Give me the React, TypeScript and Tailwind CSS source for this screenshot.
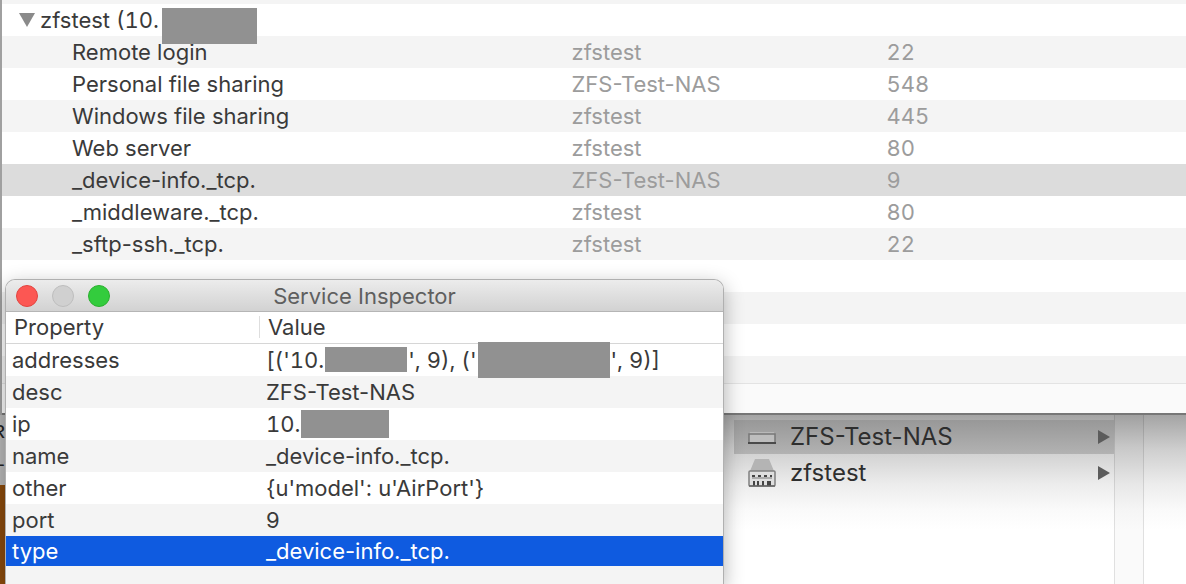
import { clsx } from 'clsx'

interface Service {
  name: string
  host: string
  port: number
  selected?: boolean
}

const services: Service[] = [
  { name: 'Remote login', host: 'zfstest', port: 22 },
  { name: 'Personal file sharing', host: 'ZFS-Test-NAS', port: 548 },
  { name: 'Windows file sharing', host: 'zfstest', port: 445 },
  { name: 'Web server', host: 'zfstest', port: 80 },
  { name: '_device-info._tcp.', host: 'ZFS-Test-NAS', port: 9, selected: true },
  { name: '_middleware._tcp.', host: 'zfstest', port: 80 },
  { name: '_sftp-ssh._tcp.', host: 'zfstest', port: 22 }
]

function Redacted({ className }: { className: string }) {
  return <span aria-label="redacted" className={clsx('inline-block shrink-0 bg-[#919191]', className)} />
}

const properties = [
  {
    key: 'addresses',
    value: (
      <span className="flex h-8 items-center gap-px tabular-nums">
        [('10.
        <Redacted className="h-[25px] w-[82px]" />
        ', 9), ('
        <Redacted className="h-9 w-[132px]" />
        ', 9)]
      </span>
    )
  },
  { key: 'desc', value: 'ZFS-Test-NAS' },
  {
    key: 'ip',
    value: (
      <span className="flex h-8 items-center gap-px tabular-nums">
        10.
        <Redacted className="h-7 w-[88px]" />
      </span>
    )
  },
  { key: 'name', value: '_device-info._tcp.' },
  { key: 'other', value: "{u'model': u'AirPort'}" },
  { key: 'port', value: '9' },
  { key: 'type', value: '_device-info._tcp.', selected: true }
]

function ServiceBrowser() {
  return (
    <section className="relative ml-0.5 border-b-2 border-[#777] bg-white">
      <div className="h-1 bg-[#f4f4f4]" />
      <table className="w-full table-fixed border-collapse text-left">
        <colgroup>
          <col className="w-[48.1%]" />
          <col className="w-[26.6%]" />
          <col />
        </colgroup>
        <tbody>
          <tr className="h-8">
            <td colSpan={3} className="p-0">
              <div className="flex h-8 items-center pl-4 tabular-nums">
                <button type="button" aria-label="Collapse zfstest" className="mr-1 h-8 w-[18px]">
                  <svg viewBox="0 0 18 16" className="h-4 w-[18px]" fill="#8a8a8a">
                    <path d="M1 1h16L9 15z" />
                  </svg>
                </button>
                zfstest (10.
                <Redacted className="relative z-10 mt-3 ml-[3px] h-9 w-[95px]" />
              </div>
            </td>
          </tr>
          {services.map((service) => (
            <tr
              key={service.name}
              className={clsx('h-8', service.selected ? 'bg-[#dcdcdc]' : 'odd:bg-white even:bg-[#f4f4f4]')}
            >
              <td className="p-0 pl-[70px]">{service.name}</td>
              <td className="p-0 text-[#9c9c9c]">{service.host}</td>
              <td className="p-0 text-[#9c9c9c] tabular-nums">{service.port}</td>
            </tr>
          ))}
        </tbody>
      </table>
      {/* empty striped rows */}
      <div className="h-8 bg-white" />
      <div className="h-8 bg-[#f4f4f4]" />
      <div className="h-8 bg-white" />
      <div className="h-[27px] bg-[#f4f4f4]" />
      <footer className="h-[30px] border-t border-[#e3e3e3] bg-[#fafafa]" />
    </section>
  )
}

function ServiceInspector() {
  return (
    <section className="absolute top-[279px] bottom-0 left-[5px] w-[719px] overflow-hidden rounded-t-[10px] border border-b-0 border-[#b0b0b0] bg-[#f4f4f4] shadow-[0_6px_20px_rgba(0,0,0,0.3)]">
      <header className="grid h-8 grid-cols-[1fr_auto_1fr] items-center border-b border-[#b5b5b5] bg-linear-to-b from-[#ececec] to-[#d2d2d2] px-2.5">
        <div className="flex gap-3.5">
          <button type="button" aria-label="Close" className="size-[22px] rounded-full border border-[#e2443f] bg-[#fc5753]" />
          <button type="button" aria-label="Minimize" className="size-[22px] rounded-full border border-[#bdbdbd] bg-[#d0d0d0]" />
          <button type="button" aria-label="Zoom" className="size-[22px] rounded-full border border-[#2bb02f] bg-[#33cc3d]" />
        </div>
        <h1 className="text-[#5f5f5f]">Service Inspector</h1>
      </header>
      <table className="w-full table-fixed border-collapse text-left">
        <colgroup>
          <col className="w-[253px]" />
          <col />
        </colgroup>
        <thead>
          <tr className="h-[31px] border-b border-[#d6d6d6] bg-white">
            <th className="p-0 pl-2 font-normal">Property</th>
            <th className="p-0 font-normal">
              <div className="flex h-[22px] items-center border-l border-[#dedede] pl-2">Value</div>
            </th>
          </tr>
        </thead>
        <tbody>
          {properties.map((property) => (
            <tr
              key={property.key}
              className={
                property.selected ? 'h-[30px] bg-[#0f5be0] text-white' : 'h-8 odd:bg-white even:bg-[#f4f4f4]'
              }
            >
              <td className="p-0 pl-1.5">{property.key}</td>
              <td className="p-0 pl-[7px]">{property.value}</td>
            </tr>
          ))}
        </tbody>
      </table>
    </section>
  )
}

function AirPortIcon() {
  return (
    <svg viewBox="0 0 28 28" className="size-7 shrink-0">
      <path d="M2 9h24l1 3H1z" fill="#b9b9b9" />
      <rect x="1" y="11" width="26" height="9" fill="#bdbdbd" stroke="#777" strokeWidth="1.5" />
      <path d="M0 20h28" stroke="#4a4a4a" strokeWidth="2" />
    </svg>
  )
}

function ServerIcon() {
  return (
    <svg viewBox="0 0 28 28" className="size-7 shrink-0">
      <path d="M7 0h14l5 12H2z" fill="#b4b4b4" />
      <rect x="1" y="12" width="26" height="15" rx="1" fill="#dedede" stroke="#808080" strokeWidth="1.5" />
      <path d="M4 17h3m3 0h3m3 0h3m3 0h2" stroke="#444" strokeWidth="2" />
      <path d="M4 19h20" stroke="#777" />
      <path d="M6 22v5m4-5v5m5-5v5m5-5v5m2-5v5" stroke="#444" strokeWidth="2" />
      <path d="M1 27h26" stroke="#666" strokeWidth="1.5" />
    </svg>
  )
}

const devices = [
  { name: 'ZFS-Test-NAS', icon: AirPortIcon, selected: true },
  { name: 'zfstest', icon: ServerIcon, selected: false }
]

function FinderColumns() {
  return (
    <section className="flex flex-1 bg-white bg-[linear-gradient(#a4a4a4_0px,#cfcfcf_35px,#ededed_70px,#fafafa_95px,#ffffff_115px)]">
      {/* sliver of the windows behind */}
      <div className="flex w-[5px] flex-col bg-[#8a4a0c]">
        <div className="flex h-[70px] flex-col items-end overflow-hidden bg-[#b8b8b8] pt-1 font-['Liberation_Mono',monospace] text-xl text-[#222]">
          <span>R</span>
          <span>L</span>
        </div>
      </div>
      <div className="w-[729px]" />
      <ul className="flex flex-1 flex-col gap-px pt-[5px] text-2xl text-[#2e2e2e]">
        {devices.map((device) => {
          const Icon = device.icon
          return (
            <li key={device.name}>
              <button
                type="button"
                className={clsx(
                  'flex w-full items-center gap-3.5 pr-1 pl-3.5 text-left',
                  device.selected ? 'h-[34px] bg-linear-to-b from-[#989898] to-[#b2b2b2]' : 'h-9'
                )}
              >
                <Icon />
                <span className="flex-1">{device.name}</span>
                <svg viewBox="0 0 12 14" className="h-3.5 w-3" fill="#5c5c5c">
                  <path d="M0 0l12 7L0 14z" />
                </svg>
              </button>
            </li>
          )
        })}
      </ul>
      <div className="w-[30px] border-x border-black/10 bg-black/2" />
      <div className="w-[42px]" />
    </section>
  )
}

export default function App() {
  return (
    <main className="relative flex min-h-screen flex-col overflow-hidden bg-[#a0a0a0] font-['Inter','Liberation_Sans',sans-serif] text-[22px] leading-7 text-[#3a3a3a]">
      <ServiceBrowser />
      <FinderColumns />
      <ServiceInspector />
    </main>
  )
}
